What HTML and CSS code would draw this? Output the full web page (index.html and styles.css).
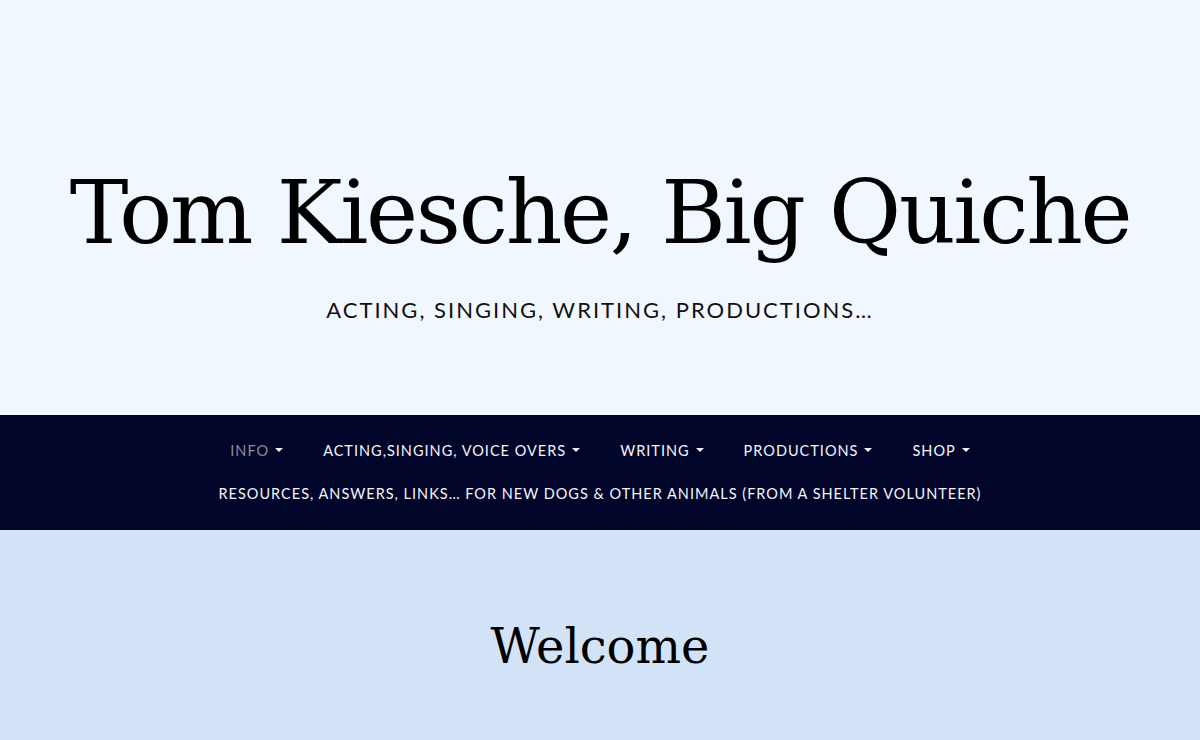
FILE: index.html
```html
<!DOCTYPE html>
<html lang="en">
<head>
<meta charset="utf-8">
<title>Tom Kiesche, Big Quiche</title>
<link rel="stylesheet" href="styles.css">
</head>
<body>
<header class="site-header">
  <h1 class="site-title">Tom Kiesche, Big Quiche</h1>
  <p class="site-tagline">Acting, Singing, Writing, Productions…</p>
</header>
<nav class="main-nav">
  <ul class="menu">
    <li class="menu-item current"><a href="#">Info</a><span class="caret"></span></li>
    <li class="menu-item"><a href="#">Acting,Singing, Voice Overs</a><span class="caret"></span></li>
    <li class="menu-item"><a href="#">Writing</a><span class="caret"></span></li>
    <li class="menu-item"><a href="#">Productions</a><span class="caret"></span></li>
    <li class="menu-item"><a href="#">Shop</a><span class="caret"></span></li>
  </ul>
  <ul class="menu">
    <li class="menu-item"><a href="#">Resources, Answers, Links… For New Dogs &amp; Other Animals (From a Shelter Volunteer)</a></li>
  </ul>
</nav>
<main class="content">
  <h2 class="page-title">Welcome</h2>
</main>
</body>
</html>
```
FILE: styles.css
```css
* { box-sizing: border-box; }
html, body { margin: 0; padding: 0; }
body {
  background: #d2e3f8;
  font-family: "Lato", "Noto Sans", sans-serif;
  color: #000;
}
.site-header {
  background: #f1f7fe;
  height: 415px;
  display: flex;
  flex-direction: column;
  align-items: center;
  justify-content: flex-start;
  padding-top: 158px;
}
.site-title {
  margin: 0;
  font-family: "DejaVu Serif", serif;
  font-weight: 400;
  font-size: 88px;
  line-height: 110px;
  letter-spacing: -2.3px;
  color: #000;
}
.site-tagline {
  margin: 28px 0 0;
  font-family: "Lato", sans-serif;
  font-size: 22px;
  line-height: 28px;
  letter-spacing: 2px;
  text-transform: uppercase;
  color: #111;
}
.main-nav {
  background: #02052a;
  height: 115px;
  padding-top: 19px;
  display: flex;
  flex-direction: column;
  align-items: center;
  gap: 11px;
}
.menu {
  list-style: none;
  margin: 0;
  padding: 0;
  display: flex;
  gap: 40px;
  justify-content: center;
}
.menu-item {
  display: flex;
  align-items: center;
  gap: 6px;
  height: 32px;
}
.menu-item a {
  color: #f4f4f8;
  text-decoration: none;
  text-transform: uppercase;
  font-size: 14.5px;
  letter-spacing: 1px;
}
.menu-item.current a { color: #8a8c98; }
.caret {
  width: 0;
  height: 0;
  border-left: 4px solid transparent;
  border-right: 4px solid transparent;
  border-top: 4px solid #f4f4f8;
}
.content {
  text-align: center;
  padding-top: 86px;
}
.page-title {
  margin: 0;
  font-family: "DejaVu Serif", serif;
  font-weight: 400;
  font-size: 48px;
  line-height: 60px;
  color: #000;
}
```
